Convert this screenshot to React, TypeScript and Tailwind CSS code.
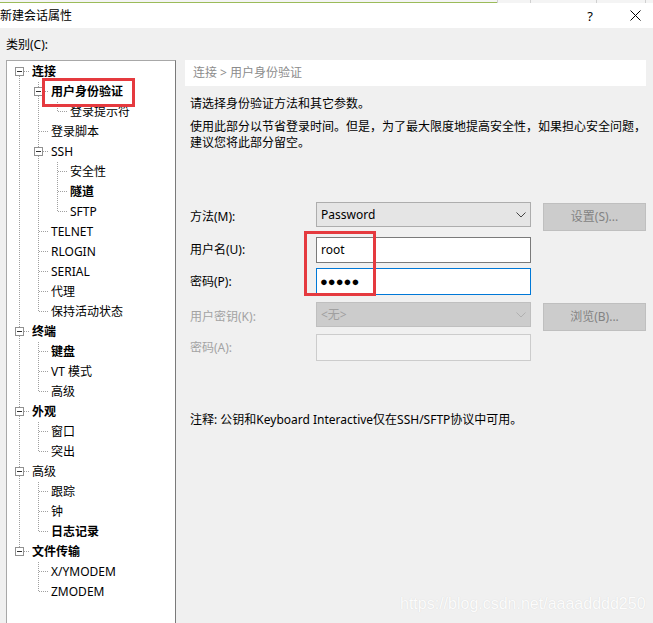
import React from 'react';

type Node = { label: string; bold?: boolean; children?: Node[] };
type Row = { label: string; bold?: boolean; level: number; lastFlags: boolean[]; isLast: boolean; isFirst: boolean; hasKids: boolean };

const tree: Node[] = [
  {
    label: '连接', bold: true, children: [
      { label: '用户身份验证', bold: true, children: [{ label: '登录提示符' }] },
      { label: '登录脚本' },
      { label: 'SSH', children: [{ label: '安全性' }, { label: '隧道', bold: true }, { label: 'SFTP' }] },
      { label: 'TELNET' },
      { label: 'RLOGIN' },
      { label: 'SERIAL' },
      { label: '代理' },
      { label: '保持活动状态' },
    ],
  },
  { label: '终端', bold: true, children: [{ label: '键盘', bold: true }, { label: 'VT 模式' }, { label: '高级' }] },
  { label: '外观', bold: true, children: [{ label: '窗口' }, { label: '突出' }] },
  { label: '高级', children: [{ label: '跟踪' }, { label: '钟' }, { label: '日志记录', bold: true }] },
  { label: '文件传输', bold: true, children: [{ label: 'X/YMODEM' }, { label: 'ZMODEM' }] },
];

function flatten(nodes: Node[], level = 0, lastFlags: boolean[] = [], out: Row[] = []) {
  nodes.forEach((n, i) => {
    const isLast = i === nodes.length - 1;
    out.push({ label: n.label, bold: n.bold, level, lastFlags, isLast, isFirst: i === 0, hasKids: !!n.children });
    if (n.children) flatten(n.children, level + 1, [...lastFlags, isLast], out);
  });
  return out;
}

const DOT = { stroke: '#a0a0a0', strokeDasharray: '1 1', strokeWidth: 1 };

function Pipe({ show }: { show: boolean }) {
  return (
    <svg width="19" height="20" className="shrink-0" shapeRendering="crispEdges">
      {show && <line x1="9.5" y1="0" x2="9.5" y2="20" {...DOT} />}
    </svg>
  );
}

function Connector({ row }: { row: Row }) {
  if (row.hasKids) {
    const top = row.level > 0 || !row.isFirst;
    return (
      <svg width="19" height="20" className="shrink-0" shapeRendering="crispEdges">
        {top && <line x1="9.5" y1="0" x2="9.5" y2="5" {...DOT} />}
        {!row.isLast && <line x1="9.5" y1="14" x2="9.5" y2="20" {...DOT} />}
        <line x1="14" y1="9.5" x2="19" y2="9.5" {...DOT} />
        <rect x="5.5" y="5.5" width="8" height="8" fill="#fff" stroke="#919191" />
        <line x1="7" y1="9.5" x2="12" y2="9.5" stroke="#333" />
      </svg>
    );
  }
  return (
    <svg width="19" height="20" className="shrink-0" shapeRendering="crispEdges">
      <line x1="9.5" y1="0" x2="9.5" y2={row.isLast ? 10 : 20} {...DOT} />
      <line x1="10" y1="9.5" x2="19" y2="9.5" {...DOT} />
    </svg>
  );
}

function Chevron({ color }: { color: string }) {
  return (
    <svg width="10" height="6" viewBox="0 0 10 6" className="shrink-0">
      <polyline points="0.5,0.5 5,5 9.5,0.5" fill="none" stroke={color} strokeWidth="1" />
    </svg>
  );
}

function Select({ value, disabled }: { value: string; disabled?: boolean }) {
  return (
    <div
      className={
        disabled
          ? 'h-[25px] w-[215px] border border-[#bfbfbf] bg-[#cccccc] flex items-center justify-between pl-[4px] pr-[4px] text-[#a0a0a0]'
          : 'h-[25px] w-[215px] border border-[#adadad] bg-[#e5e5e5] flex items-center justify-between pl-[4px] pr-[4px] text-black'
      }
    >
      <span>{value}</span>
      <Chevron color={disabled ? '#b0b0b0' : '#444'} />
    </div>
  );
}

function Button({ children }: { children: React.ReactNode }) {
  return (
    <div className="ml-[12px] mt-px h-[28px] w-[103px] border border-[#bfbfbf] bg-[#cccccc] text-[#838383] flex items-center justify-center">
      {children}
    </div>
  );
}

export default function App() {
  const rows = flatten(tree);
  return (
    <div className="relative w-[653px] h-[623px] overflow-hidden bg-[#f0f0f0] text-[12px] leading-[16px] text-black font-['Noto_Sans','Noto_Sans_CJK_SC',sans-serif]">
      {/* top strip */}
      <div className="flex h-[3px] bg-[#f4f4f4]">
        <div className="w-[497px] border-b border-[#9bbb59]" />
        <div className="w-[33px] border-l border-[#d0d0d0]" />
        <div className="w-[66px] border-l border-[#d0d0d0]" />
        <div className="w-[49px] border-l border-[#d0d0d0]" />
        <div className="flex-1 border-l border-[#d0d0d0]" />
      </div>

      {/* title bar */}
      <div className="h-[25px] bg-white flex items-center">
        <span>新建会话属性</span>
        <span className="ml-auto mr-[37px] text-[13px]">?</span>
        <svg width="11" height="11" className="mr-[12px]">
          <line x1="0.5" y1="0.5" x2="10.5" y2="10.5" stroke="#000" />
          <line x1="10.5" y1="0.5" x2="0.5" y2="10.5" stroke="#000" />
        </svg>
      </div>

      <div className="h-[32px] pt-[9px] pl-[6px]">类别(C):</div>

      <div className="flex pl-[6px] h-[563px]">
        {/* tree */}
        <div className="relative w-[170px] h-[580px] bg-white border border-[#a8a8a8] border-r-[#7a7a7a] pl-[3px] pt-px shrink-0">
          {rows.map((r, i) => (
            <div key={i} className="flex h-[20px] items-center">
              {r.lastFlags.map((last, k) => (
                <Pipe key={k} show={!last} />
              ))}
              <Connector row={r} />
              <span className={r.bold ? 'ml-[3px] whitespace-nowrap font-bold' : 'ml-[3px] whitespace-nowrap'}>{r.label}</span>
            </div>
          ))}
          <div className="absolute left-[35px] top-[17px] w-[93px] h-[29px] border-[3px] border-[#e53a3f]" />
        </div>

        {/* right panel */}
        <div className="relative ml-[9px] w-[461px]">
          <div className="h-[26px] bg-white flex items-center pl-[8px] text-[#8c8c8c]">连接 &gt; 用户身份验证</div>
          <p className="mt-[10px] pl-[5px]">请选择身份验证方法和其它参数。</p>
          <p className="mt-[7px] pl-[5px] whitespace-nowrap">
            使用此部分以节省登录时间。但是，为了最大限度地提高安全性，如果担心安全问题，
            <br />
            建议您将此部分留空。
          </p>

          <div className="mt-[51px] pl-[5px]">
            <div className="flex h-[29px]">
              <span className="w-[126px] self-center">方法(M):</span>
              <Select value="Password" />
              <Button>设置(S)...</Button>
            </div>
            <div className="flex h-[26px] mt-[6px] items-center">
              <span className="w-[126px]">用户名(U):</span>
              <div className="h-[26px] w-[215px] border border-[#7a7a7a] bg-white flex items-center pl-[4px]">root</div>
            </div>
            <div className="flex h-[27px] mt-[5px] items-center">
              <span className="w-[126px]">密码(P):</span>
              <div className="h-[27px] w-[215px] border border-[#0078d7] bg-white flex items-center pl-[3px] text-[13px] font-['Liberation_Sans',sans-serif]">
                ●●●●●
              </div>
            </div>
            <div className="flex h-[29px] mt-[7px]">
              <span className="w-[126px] self-center text-[#a3a3a3]">用户密钥(K):</span>
              <Select value="<无>" disabled />
              <Button>浏览(B)...</Button>
            </div>
            <div className="flex h-[27px] mt-[3px] items-center">
              <span className="w-[126px] text-[#a3a3a3]">密码(A):</span>
              <div className="h-[27px] w-[215px] border border-[#cccccc] bg-[#f3f3f3]" />
            </div>
          </div>

          <p className="mt-[51px] pl-[5px] whitespace-nowrap">注释: 公钥和Keyboard Interactive仅在SSH/SFTP协议中可用。</p>

          <div className="absolute left-[119px] top-[171px] w-[72px] h-[65px] border-[3px] border-[#e53a3f]" />
        </div>
      </div>

      {/* watermark */}
      <div className="absolute left-[400px] top-[594px] text-[16px] leading-[20px] text-[#fcfcfc] font-['Liberation_Sans',sans-serif] [text-shadow:0_0_1px_#d2d2d2]">
        https://blog.csdn.net/aaaadddd250
      </div>
    </div>
  );
}
